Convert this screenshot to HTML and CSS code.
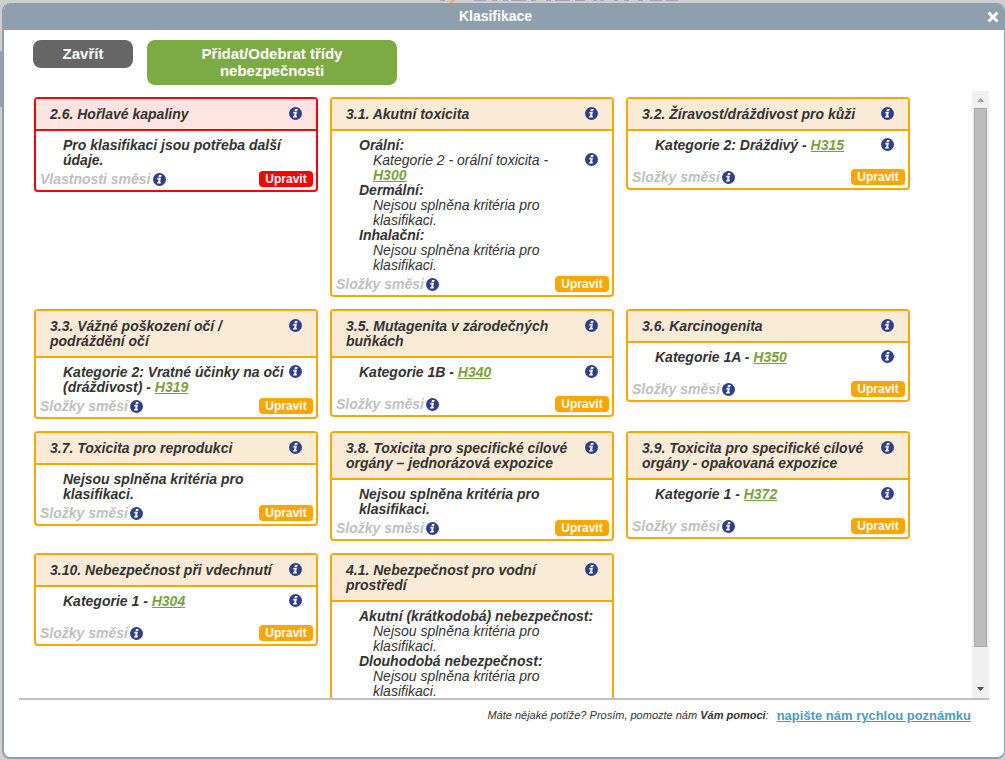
FILE: index.html
```html
<!DOCTYPE html>
<html lang="cs">
<head>
<meta charset="utf-8">
<meta name="viewport" content="width=device-width, initial-scale=1">
<title>Klasifikace</title>
<link rel="stylesheet" href="styles.css">
</head>
<body>
<svg class="defs" aria-hidden="true">
  <symbol id="info" viewBox="0 0 13 13">
    <circle cx="6.5" cy="6.5" r="6.5" fill="#2f3f8f"/>
    <path d="M6 1.900h2.600l-.5 2H5.500zM4.500 4.800h3.500l-1 4h1l-.4 1.700H4L4.400 8.900h.7l.6-2.500H4.200z" fill="#fff"/>
  </symbol>
</svg>
<div class="backdrop-logo" aria-hidden="true">
  <svg width="240" height="3" viewBox="0 0 240 3">
    <path d="M11 0h4l-2 3h-4z" fill="#e0b27e"/>
    <path d="M0 0h5M34 0h12M52 0h5M63 0h5M71 0h15M91 0h5M106 0h5M115 0h15M135 0h10M153 0h4M160 0h4M174 0h4M184 0h5M198 0h5M210 0h12M226 0h12" stroke="#a3a3b8" stroke-width="2"/>
  </svg>
</div>
<section class="dialog" role="dialog" aria-labelledby="dialog-title">
  <header class="dialog-header">
    <h1 id="dialog-title">Klasifikace</h1>
    <button class="close" type="button" aria-label="Zavřít okno">
      <svg width="12" height="12" viewBox="0 0 12 12"><path d="M1.500 1.500l9 9M10.500 1.500l-9 9" stroke="#fff" stroke-width="3"/></svg>
    </button>
  </header>
  <div class="toolbar">
    <button class="tool tool-close" type="button">Zavřít</button>
    <button class="tool tool-add" type="button">Přidat/Odebrat třídy nebezpečnosti</button>
  </div>
  <div class="pane">
    <main class="cards">
      <article class="card card-error">
        <header class="card-title"><h2>2.6. Hořlavé kapaliny</h2><svg class="info"><use href="#info"/></svg></header>
        <div class="card-body"><p>Pro klasifikaci jsou potřeba další údaje.</p></div>
        <footer class="card-foot"><span>Vlastnosti směsi</span><svg class="info"><use href="#info"/></svg><button class="edit" type="button">Upravit</button></footer>
      </article>
      <article class="card">
        <header class="card-title"><h2>3.1. Akutní toxicita</h2><svg class="info"><use href="#info"/></svg></header>
        <dl class="card-body routes">
          <dt>Orální:</dt>
          <dd class="with-info"><span>Kategorie 2 - orální toxicita - <a href="#h300">H300</a></span><svg class="info"><use href="#info"/></svg></dd>
          <dt>Dermální:</dt>
          <dd>Nejsou splněna kritéria pro klasifikaci.</dd>
          <dt>Inhalační:</dt>
          <dd>Nejsou splněna kritéria pro klasifikaci.</dd>
        </dl>
        <footer class="card-foot"><span>Složky směsi</span><svg class="info"><use href="#info"/></svg><button class="edit" type="button">Upravit</button></footer>
      </article>
      <article class="card">
        <header class="card-title"><h2>3.2. Žíravost/dráždivost pro kůži</h2><svg class="info"><use href="#info"/></svg></header>
        <div class="card-body with-info"><p>Kategorie 2: Dráždivý - <a href="#h315">H315</a></p><svg class="info"><use href="#info"/></svg></div>
        <footer class="card-foot"><span>Složky směsi</span><svg class="info"><use href="#info"/></svg><button class="edit" type="button">Upravit</button></footer>
      </article>
      <article class="card">
        <header class="card-title"><h2>3.3. Vážné poškození očí / podráždění očí</h2><svg class="info"><use href="#info"/></svg></header>
        <div class="card-body with-info"><p>Kategorie 2: Vratné účinky na oči (dráždivost) - <a href="#h319">H319</a></p><svg class="info"><use href="#info"/></svg></div>
        <footer class="card-foot"><span>Složky směsi</span><svg class="info"><use href="#info"/></svg><button class="edit" type="button">Upravit</button></footer>
      </article>
      <article class="card">
        <header class="card-title"><h2>3.5. Mutagenita v zárodečných buňkách</h2><svg class="info"><use href="#info"/></svg></header>
        <div class="card-body with-info"><p>Kategorie 1B - <a href="#h340">H340</a></p><svg class="info"><use href="#info"/></svg></div>
        <footer class="card-foot"><span>Složky směsi</span><svg class="info"><use href="#info"/></svg><button class="edit" type="button">Upravit</button></footer>
      </article>
      <article class="card">
        <header class="card-title"><h2>3.6. Karcinogenita</h2><svg class="info"><use href="#info"/></svg></header>
        <div class="card-body with-info"><p>Kategorie 1A - <a href="#h350">H350</a></p><svg class="info"><use href="#info"/></svg></div>
        <footer class="card-foot"><span>Složky směsi</span><svg class="info"><use href="#info"/></svg><button class="edit" type="button">Upravit</button></footer>
      </article>
      <article class="card">
        <header class="card-title"><h2>3.7. Toxicita pro reprodukci</h2><svg class="info"><use href="#info"/></svg></header>
        <div class="card-body"><p>Nejsou splněna kritéria pro klasifikaci.</p></div>
        <footer class="card-foot"><span>Složky směsi</span><svg class="info"><use href="#info"/></svg><button class="edit" type="button">Upravit</button></footer>
      </article>
      <article class="card">
        <header class="card-title"><h2>3.8. Toxicita pro specifické cílové orgány – jednorázová expozice</h2><svg class="info"><use href="#info"/></svg></header>
        <div class="card-body"><p>Nejsou splněna kritéria pro klasifikaci.</p></div>
        <footer class="card-foot"><span>Složky směsi</span><svg class="info"><use href="#info"/></svg><button class="edit" type="button">Upravit</button></footer>
      </article>
      <article class="card">
        <header class="card-title"><h2>3.9. Toxicita pro specifické cílové orgány - opakovaná expozice</h2><svg class="info"><use href="#info"/></svg></header>
        <div class="card-body with-info"><p>Kategorie 1 - <a href="#h372">H372</a></p><svg class="info"><use href="#info"/></svg></div>
        <footer class="card-foot"><span>Složky směsi</span><svg class="info"><use href="#info"/></svg><button class="edit" type="button">Upravit</button></footer>
      </article>
      <article class="card">
        <header class="card-title"><h2>3.10. Nebezpečnost při vdechnutí</h2><svg class="info"><use href="#info"/></svg></header>
        <div class="card-body with-info"><p>Kategorie 1 - <a href="#h304">H304</a></p><svg class="info"><use href="#info"/></svg></div>
        <footer class="card-foot"><span>Složky směsi</span><svg class="info"><use href="#info"/></svg><button class="edit" type="button">Upravit</button></footer>
      </article>
      <article class="card">
        <header class="card-title"><h2>4.1. Nebezpečnost pro vodní prostředí</h2><svg class="info"><use href="#info"/></svg></header>
        <dl class="card-body routes">
          <dt>Akutní (krátkodobá) nebezpečnost:</dt>
          <dd>Nejsou splněna kritéria pro klasifikaci.</dd>
          <dt>Dlouhodobá nebezpečnost:</dt>
          <dd>Nejsou splněna kritéria pro klasifikaci.</dd>
        </dl>
      </article>
    </main>
    <div class="scrollbar" aria-hidden="true">
      <svg width="17" height="17" viewBox="0 0 17 17"><path d="M5 11l3.500-4 3.500 4z" fill="#a3a3a3"/></svg>
      <div class="track"><div class="thumb"></div></div>
      <svg width="17" height="17" viewBox="0 0 17 17"><path d="M5 6h7l-3.500 4z" fill="#505050"/></svg>
    </div>
  </div>
  <footer class="help">
    <span>Máte nějaké potíže? Prosím, pomozte nám <b>Vám pomoci</b>:</span>
    <a href="#note">napište nám rychlou poznámku</a>
  </footer>
</section>
</body>
</html>
```
FILE: styles.css
```css
* { box-sizing: border-box; }

body {
  margin: 0;
  height: 100vh;
  overflow: hidden;
  display: flex;
  flex-direction: column;
  padding: 0 0 1px 2px;
  background: linear-gradient(#9a9eb0, #9a9eb0) 0 51px / 2px 56px no-repeat #cfcfcf;
  font-family: "Liberation Sans", Arial, sans-serif;
  font-size: 14px;
  line-height: 15px;
  color: #333;
}

h1, h2, p, dl, dd { margin: 0; }
button { border: 0; padding: 0; font: inherit; color: #fff; cursor: pointer; }

.defs { position: absolute; width: 0; height: 0; }

.backdrop-logo {
  flex: none;
  height: 3px;
  display: flex;
  justify-content: center;
  padding-left: 113px;
}

.dialog {
  flex: 1;
  min-height: 0;
  display: flex;
  flex-direction: column;
  overflow: hidden;
  border: 2px solid #909fae;
  border-width: 0 1px 2px 2px;
  border-radius: 8px;
  background: #fff;
}

.dialog-header {
  flex: none;
  display: flex;
  align-items: center;
  height: 27px;
  padding-right: 5px;
  background: #909fae;
  color: #fff;
}
.dialog-header h1 { flex: 1; font-size: 14px; text-align: center; }
.close { display: flex; background: none; }

.toolbar {
  flex: none;
  display: flex;
  align-items: flex-start;
  gap: 14px;
  padding: 10px 29px 6px;
}
.tool {
  border-radius: 8px;
  font-size: 15px;
  font-weight: bold;
  line-height: 17px;
}
.tool-close { width: 100px; padding: 5px 0 6px; background: #666; }
.tool-add { width: 250px; padding: 5px 40px 6px; background: #7dab43; }

.pane {
  flex: 1;
  min-height: 0;
  display: flex;
  margin: 0 15px;
  border-bottom: 2px solid #c0c0c0;
}
.cards {
  flex: 1;
  min-width: 0;
  overflow: hidden;
  display: grid;
  grid-template-columns: repeat(3, minmax(0, 1fr));
  align-items: start;
  align-content: start;
  gap: 12px;
  padding: 6px 62px 0 15px;
}

.card {
  border: 2px solid #ffa500;
  border-radius: 4px;
  font-style: italic;
  --accent: #ffa500;
}
.card-title {
  display: flex;
  justify-content: space-between;
  padding: 8px 14px 7px;
  border-bottom: 2px solid #ffa500;
  background: #faebd7;
}
.card-title h2 { flex: 1; font-size: 14px; font-weight: bold; }
.card-error { border-color: #f00; --accent: #f00; }
.card-error .card-title { border-color: #f00; background: #ffe4e1; }

.info { flex: none; width: 13px; height: 13px; }

.card-body {
  min-height: 35px;
  padding: 7px 14px 0 27px;
  font-weight: bold;
}
.with-info { display: flex; justify-content: space-between; }
.card-body a { color: #78a23c; font-weight: bold; }
.routes dd { padding-left: 14px; font-weight: normal; }

.card-foot {
  display: flex;
  align-items: center;
  gap: 2px;
  padding: 3px 3px 3px 4px;
  color: #c0c0c0;
  font-weight: bold;
}
.edit {
  width: 54px;
  height: 16px;
  margin-left: auto;
  border-radius: 4px;
  background: var(--accent);
  font-size: 12px;
  font-style: normal;
  font-weight: bold;
  line-height: 16px;
}

.scrollbar {
  flex: none;
  width: 17px;
  display: flex;
  flex-direction: column;
  background: #f0f0f0;
}
.track { flex: 1; padding: 0 2px; }
.thumb { height: 94%; border: 1px solid #a8a8a8; background: #bcbcbc; }

.help {
  flex: none;
  display: flex;
  justify-content: flex-end;
  gap: 8px;
  padding: 8px 33px 34px;
  font-size: 11px;
}
.help span { font-style: italic; }
.help a { color: #4a9bc7; font-size: 13px; font-weight: bold; }
```
